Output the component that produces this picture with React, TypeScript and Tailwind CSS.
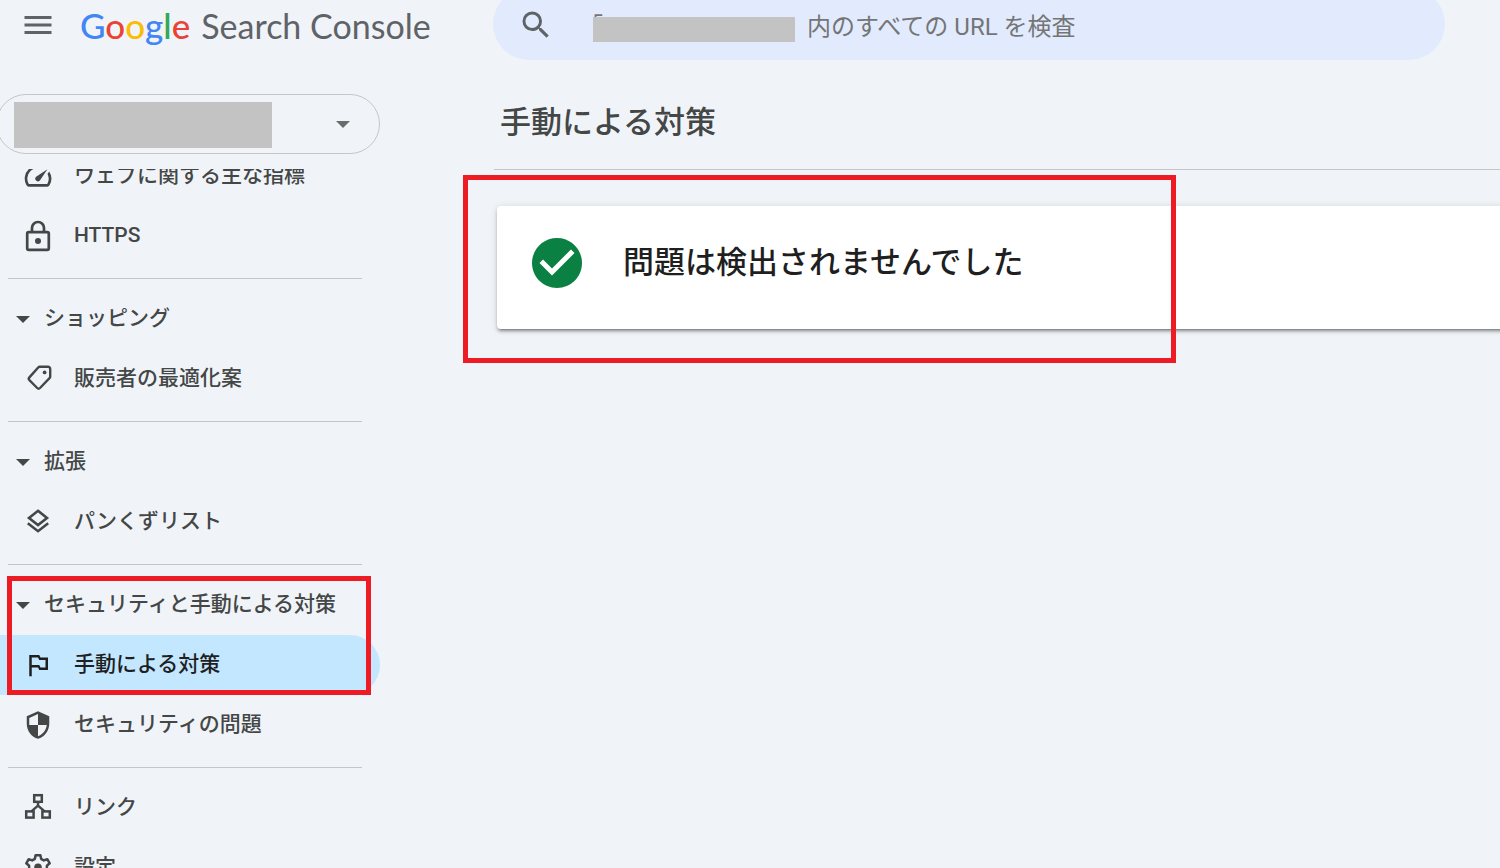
import type { ReactNode } from 'react'
import { MdMenu, MdOutlinedFlag, MdSearch, MdSecurity, MdSpeed } from 'react-icons/md'

type NavItem = {
  label: string
  icon: ReactNode
  active?: boolean
}

type NavGroup = {
  id: string
  title?: string
  highlighted?: boolean
  items: NavItem[]
}

const LockIcon = () => (
  <svg width="30" height="32" viewBox="0 0 30 32" fill="none" aria-hidden="true">
    <rect x="4.2" y="12.2" width="21.6" height="17.6" rx="1.5" stroke="currentColor" strokeWidth="2.7" />
    <path d="M9 12V8a6 6 0 0112 0v4" stroke="currentColor" strokeWidth="2.7" />
    <circle cx="15" cy="21" r="3" fill="currentColor" />
  </svg>
)

const TagIcon = () => (
  <svg width="30" height="30" viewBox="0 2 30 30" fill="none" aria-hidden="true">
    <path
      d="M16.8 4.8h8.2a2.2 2.2 0 012.2 2.2v7.4c0 .7-.2 1.2-.7 1.7L17 26a2 2 0 01-2.8 0L6.4 18.2a2 2 0 010-2.8l8.8-9.9c.4-.5 1-.7 1.6-.7z"
      stroke="currentColor"
      strokeWidth="2.4"
      strokeLinejoin="round"
    />
    <circle cx="21.6" cy="10.4" r="1.9" fill="currentColor" />
  </svg>
)

const LayersIcon = () => (
  <svg width="30" height="30" viewBox="0 1 30 30" fill="none" aria-hidden="true">
    <path d="M15 4.8l9 7.2-9 7-9-7 9-7.2z" stroke="currentColor" strokeWidth="2.6" />
    <path d="M4.8 17.2L15 25.2l10.2-8" stroke="currentColor" strokeWidth="2.6" />
  </svg>
)

const LinksIcon = () => (
  <svg width="30" height="30" viewBox="0 2 30 30" fill="none" stroke="currentColor" strokeWidth="2.5" aria-hidden="true">
    <rect x="11.2" y="4.2" width="7.6" height="6.6" />
    <rect x="3.2" y="20.4" width="7.4" height="6.2" />
    <rect x="19.4" y="20.4" width="7.4" height="6.2" />
    <path d="M15 10.8v4.4M15 14.6l-6.6 5.8M15 14.6l6.6 5.8" />
  </svg>
)

const GearIcon = () => (
  <svg width="30" height="30" viewBox="0 1 30 30" fill="none" aria-hidden="true">
    <path
      d="M12.6 3.2h4.8l.7 3.6 2.7 1.6 3.5-1.2 2.4 4.1-2.8 2.4v3.1l2.8 2.4-2.4 4.1-3.5-1.2-2.7 1.6-.7 3.6h-4.8l-.7-3.6-2.7-1.6-3.5 1.2-2.4-4.1 2.8-2.4v-3.1l-2.8-2.4 2.4-4.1 3.5 1.2 2.7-1.6.7-3.6z"
      stroke="currentColor"
      strokeWidth="2.5"
      strokeLinejoin="round"
    />
    <circle cx="15" cy="15.2" r="3.8" fill="currentColor" />
  </svg>
)

const Caret = () => (
  <svg width="14" height="7" viewBox="0 0 14 7" aria-hidden="true">
    <path d="M0 0h14L7 7z" fill="currentColor" />
  </svg>
)

const groups: NavGroup[] = [
  {
    id: 'experience',
    items: [
      { label: 'ウェブに関する主な指標', icon: <MdSpeed size={32} /> },
      { label: 'HTTPS', icon: <LockIcon /> },
    ],
  },
  {
    id: 'shopping',
    title: 'ショッピング',
    items: [{ label: '販売者の最適化案', icon: <TagIcon /> }],
  },
  {
    id: 'enhancements',
    title: '拡張',
    items: [{ label: 'パンくずリスト', icon: <LayersIcon /> }],
  },
  {
    id: 'security',
    title: 'セキュリティと手動による対策',
    highlighted: true,
    items: [
      { label: '手動による対策', icon: <MdOutlinedFlag size={30} />, active: true },
      { label: 'セキュリティの問題', icon: <MdSecurity size={30} /> },
    ],
  },
  {
    id: 'general',
    items: [
      { label: 'リンク', icon: <LinksIcon /> },
      { label: '設定', icon: <GearIcon /> },
    ],
  },
]

const logoLetters = [
  { letter: 'G', color: 'text-[#4285f4]' },
  { letter: 'o', color: 'text-[#ea4335]' },
  { letter: 'o', color: 'text-[#fbbc04]' },
  { letter: 'g', color: 'text-[#4285f4]' },
  { letter: 'l', color: 'text-[#34a853]' },
  { letter: 'e', color: 'text-[#ea4335]' },
]

function Header() {
  return (
    <header className="flex h-12 shrink-0 items-center">
      <div className="flex w-[493px] shrink-0 items-center pl-5 pt-[2px]">
        <button type="button" aria-label="メニュー" className="text-[#5f6368]">
          <MdMenu size={36} />
        </button>
        <a href="#" className="ml-6 flex items-baseline gap-[11px] whitespace-nowrap font-['Lato',sans-serif] leading-10">
          <span className="text-[35px] font-medium">
            {logoLetters.map(({ letter, color }, i) => (
              <span key={i} className={color}>{letter}</span>
            ))}
          </span>
          <span className="text-[34px] text-[#5f6368]">Search Console</span>
        </a>
      </div>
      <label className="mr-[55px] flex h-[72px] min-w-0 flex-1 items-center rounded-full bg-[#e1ebfd] pl-[25px] pt-[2px]">
        <MdSearch size={36} className="shrink-0 text-[#5f6368]" />
        <span className="relative ml-[39px] mt-2 h-[25px] w-[202px] shrink-0">
          <span className="absolute -left-[14px] -top-[2px] text-2xl leading-6 text-[#757575]">「</span>
          <span className="absolute inset-0 bg-[#c3c3c3]" />
        </span>
        <input
          type="text"
          aria-label="URL を検査"
          placeholder="内のすべての URL を検査"
          className="ml-3 mt-1 min-w-0 flex-1 bg-transparent text-2xl text-[#444746] outline-none placeholder:text-[#757575]"
        />
      </label>
    </header>
  )
}

function PropertySelect() {
  return (
    <div className="relative -ml-1 h-[60px] shrink-0">
      <select
        aria-label="プロパティ"
        className="h-full w-full appearance-none rounded-full border border-[#c4c7c5] bg-transparent outline-none"
      />
      <span className="pointer-events-none absolute left-[18px] top-2 h-[46px] w-[258px] bg-[#c3c3c3]" />
      <span className="pointer-events-none absolute inset-y-0 right-[30px] flex items-center text-[#6b6b6b]">
        <Caret />
      </span>
    </div>
  )
}

function NavSection({ group }: { group: NavGroup }) {
  return (
    <div className="group pb-3">
      <hr className="ml-2 mr-[18px] border-[#c4c7c5] group-first:hidden" />
      <div className="relative pt-[10px] group-first:pt-0">
        {group.title && (
          <button type="button" aria-expanded="true" className="flex h-[60px] w-full items-center gap-[14px] pl-4 text-left">
            <Caret />
            {group.title}
          </button>
        )}
        <ul>
          {group.items.map((item) => (
            <li key={item.label}>
              <a
                href="#"
                aria-current={item.active ? 'page' : undefined}
                className={
                  item.active
                    ? 'flex h-[60px] items-center rounded-r-full bg-[#c2e7ff] pl-[22px] text-[#1f1f1f]'
                    : 'flex h-[60px] items-center pl-[22px]'
                }
              >
                <span className="flex w-8 justify-center">{item.icon}</span>
                <span className="ml-5">{item.label}</span>
              </a>
            </li>
          ))}
        </ul>
        {group.highlighted && (
          <div className="pointer-events-none absolute left-[7px] right-[9px] top-[11px] h-[119px] border-5 border-[#ed1c24]" />
        )}
      </div>
    </div>
  )
}

function Sidebar() {
  return (
    <aside className="flex w-[380px] shrink-0 flex-col pt-[46px]">
      <PropertySelect />
      <nav className="mt-[15px] min-h-0 flex-1 overflow-hidden text-[21px] font-medium text-[#444746]">
        <div className="-mt-[23px]">
          {groups.map((group) => (
            <NavSection key={group.id} group={group} />
          ))}
        </div>
      </nav>
    </aside>
  )
}

function ManualActions() {
  return (
    <main className="min-w-0 flex-1 pl-[114px] pt-[46px]">
      <h1 className="flex h-[75px] items-center pb-4 pl-[6px] text-[31px] font-medium text-[#444746]">手動による対策</h1>
      <hr className="border-[#c4c7c5]" />
      <div className="relative pt-9">
        <section className="-mr-2 ml-[3px] flex h-[123px] items-center rounded-sm bg-white pb-[10px] pl-[35px] shadow-[0_4px_2px_-3px_rgba(0,0,0,0.3),0_3px_3px_0_rgba(0,0,0,0.2),0_1px_7px_0_rgba(0,0,0,0.14)]">
          <svg width="50" height="50" viewBox="2 2 20 20" aria-hidden="true">
            <path
              fill="#0b8043"
              d="M12 2C6.48 2 2 6.48 2 12s4.48 10 10 10 10-4.48 10-10S17.52 2 12 2z"
            />
            <path fill="#fff" d="M10 17l-5-5 1.41-1.41L10 14.17l7.59-7.59L19 8l-9 9z" />
          </svg>
          <p className="ml-[41px] pt-[2px] text-[31px] font-medium text-[#1f1f1f]">問題は検出されませんでした</p>
        </section>
        <div className="pointer-events-none absolute -left-[31px] top-[5px] h-[188px] w-[713px] border-5 border-[#ed1c24]" />
      </div>
    </main>
  )
}

export default function App() {
  return (
    <div
      lang="ja"
      className="flex h-screen flex-col overflow-hidden bg-[#f0f4f9] font-['Roboto','Noto_Sans_CJK_JP',sans-serif]"
    >
      <Header />
      <div className="flex min-h-0 flex-1">
        <Sidebar />
        <ManualActions />
      </div>
    </div>
  )
}
